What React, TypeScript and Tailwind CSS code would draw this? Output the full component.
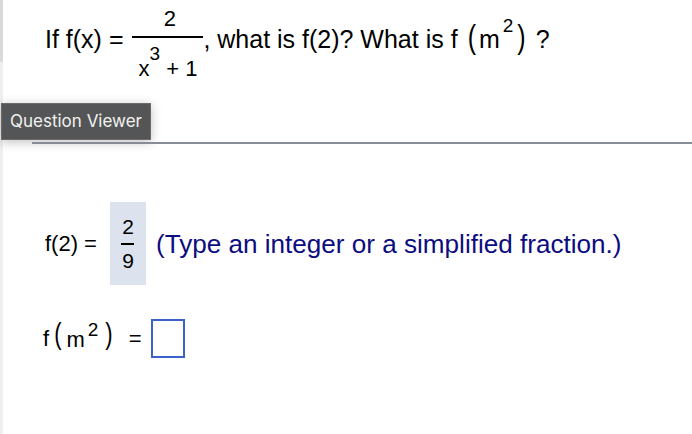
import React from "react";

// stretched parenthesis glyph, as the math renderer draws fenced groups
function Paren({ ch, className }: { ch: string; className?: string }) {
  return <span className={"inline-block scale-y-[1.3] " + (className ?? "")}>{ch}</span>;
}

export default function App() {
  return (
    <div className="flex h-[434px] w-[692px] overflow-hidden bg-white text-black font-['Liberation_Sans',Arial,sans-serif]">
      {/* left gutter strip */}
      <div className="flex w-[3px] shrink-0 flex-col">
        <div className="h-[62px] bg-[#dadada]" />
        <div className="flex-1 bg-[#efefef]" />
      </div>

      <div className="flex flex-1 flex-col">
        {/* question */}
        <div className="flex h-[80px] items-start pl-[42px]">
          <span className="mt-[25px] whitespace-pre text-[25px] leading-[28px]">If f(x) =</span>
          <span className="ml-[9px] mt-[6px] flex flex-col text-[22px]">
            <span className="pl-[4px] text-center leading-[25px]">2</span>
            <span className="mt-[5px] h-[2px] bg-black" />
            <span className="mt-[18px] whitespace-pre px-[6px] text-center leading-[25px]">
              x<sup className="relative -top-[16px] text-[19px]">3</sup> + 1
            </span>
          </span>
          <span className="mt-[25px] flex items-center whitespace-pre text-[25px] leading-[28px]">
            , what is f(2)? What is f
            <Paren ch="(" className="ml-[10px] -translate-y-[3px]" />
            <span className="ml-[3px]">m</span>
            <sup className="relative -top-[13px] ml-[3px] text-[19px]">2</sup>
            <Paren ch=")" className="ml-[4px] -translate-y-[3px]" />
            <span className="ml-[10px]">?</span>
          </span>
        </div>

        {/* viewer tab + rule */}
        <div className="mt-[23px] flex flex-col">
          <div className="-ml-[2px] flex h-[37px] w-[150px] items-center justify-center border border-[#6b6b6b] bg-[#545556] font-['Inter',sans-serif] text-[17px] text-[#f2f2f2] shadow-[0_2px_10px_rgba(0,0,0,0.25)]">
            Question Viewer
          </div>
          <div className="ml-[29px] mt-[2px] h-[2px] bg-[#878c98]" />
        </div>

        {/* answer row 1 */}
        <div className="mt-[58px] flex items-center pl-[42px]">
          <span className="whitespace-pre text-[22px] leading-[25px]">f(2) =</span>
          <div className="ml-[13px] flex h-[83px] w-[36px] flex-col items-center justify-center bg-[#dce3ee]">
            <span className="text-[21px] leading-[22px]">2</span>
            <span className="my-[5px] h-[2px] w-[13px] bg-black" />
            <span className="text-[21px] leading-[22px]">9</span>
          </div>
          <span className="ml-[10px] whitespace-pre text-[26.1px] leading-[28px] text-[#0c0c80]">
            (Type an integer or a simplified fraction.)
          </span>
        </div>

        {/* answer row 2 */}
        <div className="mt-[34px] flex items-center pl-[40px] text-[22px] leading-[25px]">
          <span className="flex items-center whitespace-pre">
            f
            <Paren ch="(" className="ml-[5px] -translate-y-[5px] scale-y-[1.35]" />
            <span className="ml-[5px] translate-y-[1px]">m</span>
            <sup className="relative -top-[9px] ml-[3px] text-[19px]">2</sup>
            <Paren ch=")" className="ml-[7px] -translate-y-[5px] scale-y-[1.35]" />
            <span className="ml-[16px]">=</span>
          </span>
          <span className="ml-[9px] h-[39px] w-[34px] border-2 border-[#3c62c8]" />
        </div>
      </div>
    </div>
  );
}
